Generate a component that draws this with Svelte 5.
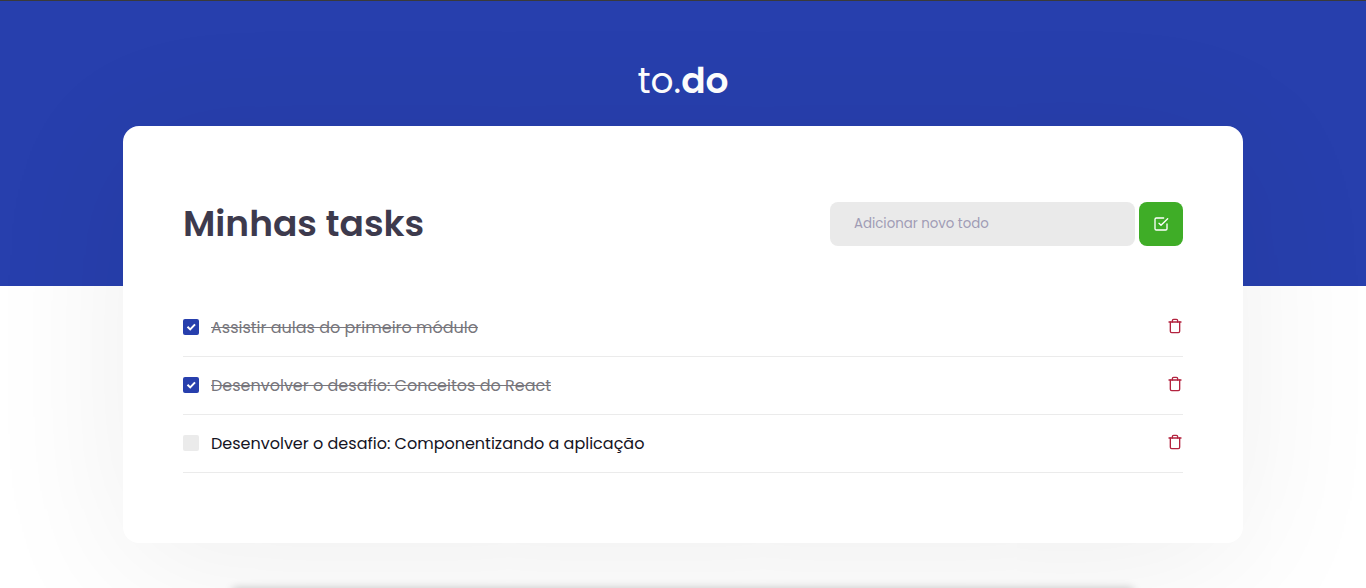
<script>
  let tasks = $state([
    { id: 1, title: 'Assistir aulas do primeiro módulo', done: true },
    { id: 2, title: 'Desenvolver o desafio: Conceitos do React', done: true },
    { id: 3, title: 'Desenvolver o desafio: Componentizando a aplicação', done: false }
  ]);
  let draft = $state('');

  function addTask(event) {
    event.preventDefault();
    const title = draft.trim();
    if (!title) return;
    tasks.push({ id: Date.now(), title, done: false });
    draft = '';
  }

  function removeTask(id) {
    tasks = tasks.filter((task) => task.id !== id);
  }
</script>

<div class="page">
  <header class="hero">
    <div class="logo">to.<strong>do</strong></div>
  </header>

  <main class="card">
    <div class="heading">
      <h1>Minhas tasks</h1>
      <form class="entry" onsubmit={addTask}>
        <input type="text" placeholder="Adicionar novo todo" aria-label="Adicionar novo todo" bind:value={draft} />
        <button type="submit" class="add" aria-label="Adicionar">
          <svg width="16" height="16" viewBox="0 0 24 24" fill="none" stroke="currentColor" stroke-width="2" stroke-linecap="round" stroke-linejoin="round">
            <polyline points="9 11 12 14 22 4" />
            <path d="M21 12v7a2 2 0 0 1-2 2H5a2 2 0 0 1-2-2V5a2 2 0 0 1 2-2h11" />
          </svg>
        </button>
      </form>
    </div>

    <ul class="list">
      {#each tasks as task (task.id)}
        <li>
          <label class:done={task.done}>
            <span class="box">
              <input type="checkbox" bind:checked={task.done} />
              <svg width="16" height="16" viewBox="0 0 16 16" fill="none" stroke="#fff" stroke-width="2">
                <path d="M4.5 7.8 7.2 10.4 12 5.4" />
              </svg>
            </span>
            <span class="title">{task.title}</span>
          </label>
          <button type="button" class="remove" aria-label="Remover" onclick={() => removeTask(task.id)}>
            <svg width="16" height="16" viewBox="0 0 24 24" fill="none" stroke="currentColor" stroke-width="2" stroke-linecap="round" stroke-linejoin="round">
              <polyline points="3 6 5 6 21 6" />
              <path d="M19 6v14a2 2 0 0 1-2 2H7a2 2 0 0 1-2-2V6m3 0V4a2 2 0 0 1 2-2h4a2 2 0 0 1 2 2v2" />
            </svg>
          </button>
        </li>
      {/each}
    </ul>
  </main>
</div>

<div class="dock"></div>

<style>
  :global(body) {
    background: #fff;
    color: #15141f;
    font-family: Poppins, Inter, sans-serif;
  }

  :global(*) {
    box-sizing: border-box;
  }

  .page {
    min-height: 100vh;
  }

  .hero {
    border-top: 1px solid #3a3a3a;
    background: #273fad;
    padding: 50px 24px 175px;
    text-align: center;
  }

  .logo {
    color: #fff;
    font-size: 36px;
    font-weight: 400;
    line-height: 60px;
  }

  .logo strong {
    font-weight: 600;
  }

  .card {
    position: relative;
    width: 82%;
    max-width: 1120px;
    margin: -160px auto 0;
    padding: 70px 60px;
    border-radius: 16px;
    background: #fff;
    box-shadow: 0 20px 150px rgba(0, 0, 0, 0.07);
  }

  .heading {
    display: flex;
    align-items: center;
    justify-content: space-between;
    gap: 24px;
    margin-bottom: 47px;
  }

  h1 {
    margin: 0;
    color: #3d3a4d;
    font-size: 36px;
    font-weight: 600;
    line-height: 56px;
  }

  .entry {
    display: flex;
    gap: 4px;
  }

  .entry input {
    width: 305px;
    height: 44px;
    padding: 0 24px;
    border: 0;
    border-radius: 8px;
    background: #eaeaea;
    color: #3d3a4d;
    font-family: inherit;
  }

  .entry input::placeholder {
    color: #a09cb5;
    opacity: 1;
  }

  .add {
    display: grid;
    place-items: center;
    width: 44px;
    height: 44px;
    padding: 0;
    border: 0;
    border-radius: 8px;
    background: #3fad27;
    color: #fff;
    cursor: pointer;
  }

  .list {
    margin: 0;
    padding: 0;
    list-style: none;
  }

  li {
    display: flex;
    align-items: center;
    justify-content: space-between;
    padding: 16px 0;
    border-bottom: 1px solid #ebebeb;
  }

  label {
    display: flex;
    align-items: flex-start;
    gap: 12px;
    cursor: pointer;
  }

  .box {
    display: grid;
    width: 16px;
    height: 16px;
    margin-top: 4px;
  }

  .box input,
  .box svg {
    grid-area: 1 / 1;
  }

  .box input {
    appearance: none;
    width: 16px;
    height: 16px;
    margin: 0;
    border-radius: 2px;
    background: #ebebeb;
  }

  .box input:checked {
    background: #273fad;
  }

  .box svg {
    visibility: hidden;
    pointer-events: none;
  }

  .box input:checked + svg {
    visibility: visible;
  }

  .title {
    font-size: 16px;
    line-height: 25px;
  }

  .done .title {
    color: #77767c;
    text-decoration: line-through;
  }

  .remove {
    display: grid;
    padding: 0 0 3px;
    border: 0;
    background: none;
    color: #b3233f;
    cursor: pointer;
  }

  .dock {
    position: fixed;
    bottom: -8px;
    left: 17%;
    right: 17%;
    height: 8px;
    border-radius: 8px;
    box-shadow: 0 0 8px rgba(0, 0, 0, 0.22);
  }
</style>
